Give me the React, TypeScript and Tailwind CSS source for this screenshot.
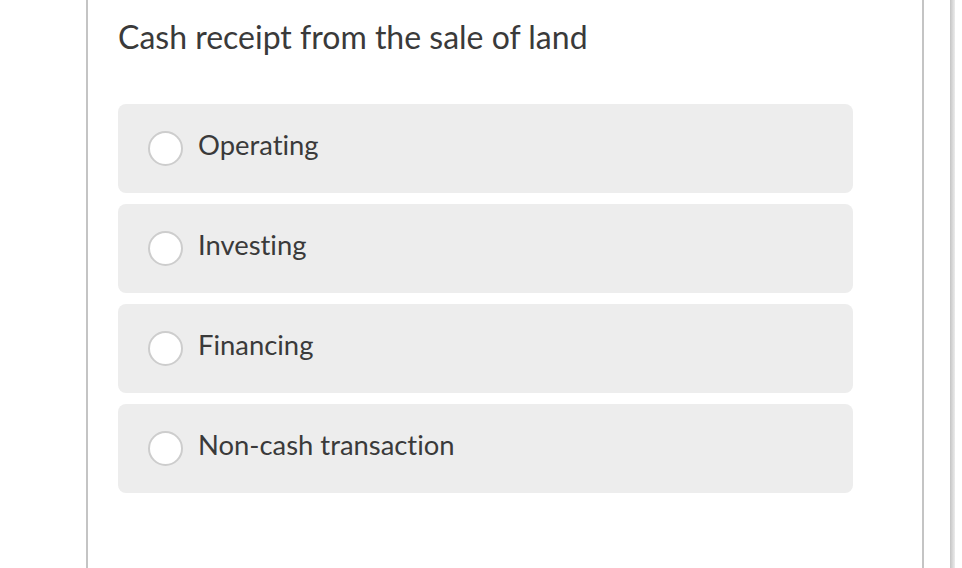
const options = ["Operating", "Investing", "Financing", "Non-cash transaction"]

export default function App() {
  return (
    <div className="h-[568px] w-[962px] overflow-hidden bg-white [font-variant-ligatures:none]" style={{ fontFamily: "Lato, 'Open Sans', sans-serif" }}>
      <div className="flex h-full">
        <div className="ml-[86px] h-full w-[838px] border-x-2 border-[#c4c4c4] pl-[30px] pr-[69px]">
          <h1 className="pt-[17px] text-[32px] leading-[40px] text-[#3a3a3a]">Cash receipt from the sale of land</h1>
          <div className="mt-[47px] flex flex-col gap-[11px]">
            {options.map((opt) => (
              <label key={opt} className="flex h-[89px] items-center rounded-lg bg-[#ededed] pl-[30px]">
                <span className="h-[35px] w-[35px] shrink-0 rounded-full border-2 border-[#cdcdcd] bg-white" />
                <span className="ml-[15px] -mt-[7px] text-[27.4px] text-[#3a3a3a]">{opt}</span>
              </label>
            ))}
          </div>
        </div>
        <div className="ml-[26px] h-full w-[5px] bg-gradient-to-r from-[#c4c4c4] to-[#ececec]" />
      </div>
    </div>
  )
}
